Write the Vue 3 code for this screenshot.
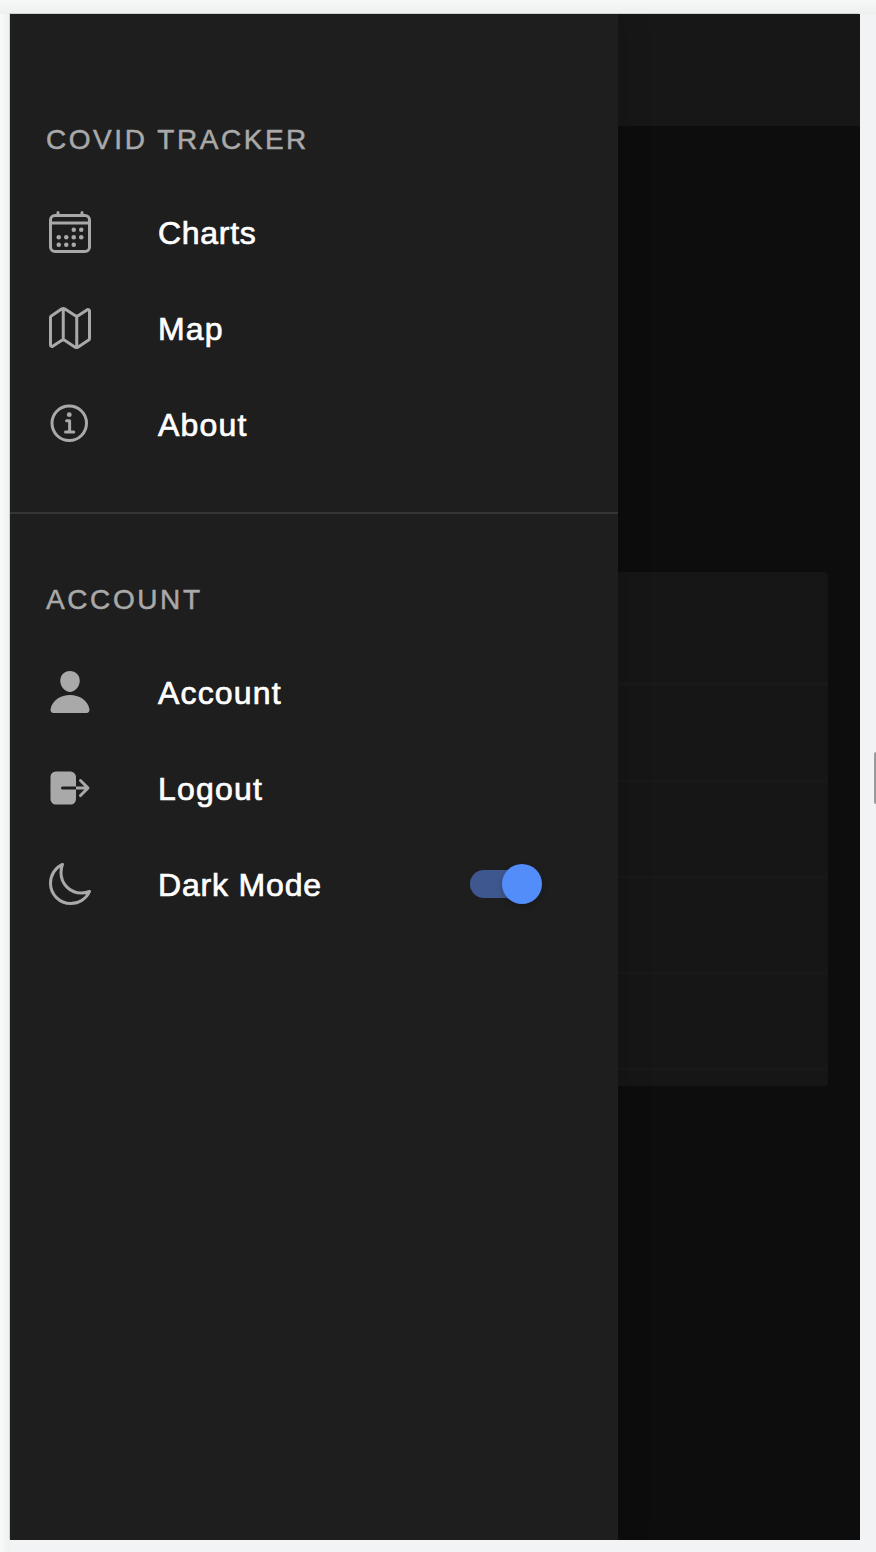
<script setup>
import { ref } from 'vue'

const dark = ref(true)
</script>

<template>
  <div class="stage">
    <div class="device">
      <nav class="menu">
        <section class="group">
          <h2 class="heading tracker">COVID TRACKER</h2>
          <a class="item">
            <svg class="icon" viewBox="0 0 512 512">
              <rect class="line" x="48" y="80" width="416" height="384" rx="48" />
              <circle cx="296" cy="232" r="24" /><circle cx="376" cy="232" r="24" />
              <circle cx="296" cy="312" r="24" /><circle cx="376" cy="312" r="24" />
              <circle cx="136" cy="312" r="24" /><circle cx="216" cy="312" r="24" />
              <circle cx="136" cy="392" r="24" /><circle cx="216" cy="392" r="24" />
              <circle cx="296" cy="392" r="24" />
              <path class="line" d="M128 48v32M384 48v32" />
              <path class="line" d="M464 160H48" />
            </svg>
            <span class="label charts">Charts</span>
          </a>
          <a class="item">
            <svg class="icon" viewBox="0 0 512 512">
              <path class="line" d="M313.27 124.64L198.73 51.36a32 32 0 00-29.28.35L56.51 127.49A16 16 0 0048 141.63v295.8a16 16 0 0023.49 14.14l97.82-63.79a32 32 0 0129.5-.24l111.86 73a32 32 0 0029.27-.11l115.43-75.94a16 16 0 008.63-14.2V74.57a16 16 0 00-23.49-14.14l-98 63.86a32 32 0 01-29.24.35zM328 128v336M184 384V48" />
            </svg>
            <span class="label map">Map</span>
          </a>
          <a class="item">
            <svg class="icon" viewBox="0 0 512 512">
              <path class="line" d="M248 64C146.39 64 64 146.39 64 248s82.39 184 184 184 184-82.39 184-184S349.61 64 248 64z" />
              <path class="line" d="M220 220h32v116M208 340h88" />
              <path d="M248 130a26 26 0 1026 26 26 26 0 00-26-26z" />
            </svg>
            <span class="label about">About</span>
          </a>
        </section>
        <section class="group second">
          <h2 class="heading account">ACCOUNT</h2>
          <a class="item">
            <svg class="icon" viewBox="0 0 512 512">
              <path d="M332.64 64.58C313.18 43.57 286 32 256 32c-30.16 0-57.43 11.5-76.8 32.38-19.58 21.11-29.12 49.8-26.88 80.78C156.76 206.28 203.27 256 256 256s99.16-49.71 103.67-110.82c2.27-30.7-7.33-59.33-27.03-80.6zM432 480H80a31 31 0 01-24.2-11.13c-6.5-7.77-9.12-18.38-7.18-29.11C57.06 392.94 83.4 353.61 124.8 326c36.78-24.51 83.37-38 131.2-38s94.42 13.5 131.2 38c41.4 27.6 67.74 66.93 76.18 113.75 1.94 10.73-.68 21.34-7.18 29.11A31 31 0 01432 480z" />
            </svg>
            <span class="label user">Account</span>
          </a>
          <a class="item">
            <svg class="icon" viewBox="0 0 512 512">
              <path d="M160 256a16 16 0 0116-16h144V136c0-32-33.79-56-64-56H104a56.06 56.06 0 00-56 56v240a56.06 56.06 0 0056 56h160a56.06 56.06 0 0056-56V272H176a16 16 0 01-16-16zM459.31 244.69l-80-80a16 16 0 00-22.62 22.62L409.37 240H320v32h89.37l-52.68 52.69a16 16 0 1022.62 22.62l80-80a16 16 0 000-22.62z" />
            </svg>
            <span class="label logout">Logout</span>
          </a>
          <div class="item">
            <svg class="icon" viewBox="0 0 512 512">
              <path class="line" d="M160 136c0-30.62 4.51-61.61 16-88C99.57 81.27 48 159.32 48 248c0 119.29 96.71 216 216 216 88.68 0 166.73-51.57 200-128-26.39 11.49-57.38 16-88 16-119.29 0-216-96.71-216-216z" />
            </svg>
            <span class="label mode">Dark Mode</span>
            <button class="toggle" :class="{ on: dark }" role="switch" :aria-checked="dark" @click="dark = !dark">
              <span class="knob"></span>
            </button>
          </div>
        </section>
      </nav>
      <main class="page">
        <header class="toolbar"></header>
        <div class="card">
          <div class="row first"></div>
          <div class="row"></div>
          <div class="row"></div>
          <div class="row"></div>
          <div class="row"></div>
        </div>
      </main>
    </div>
    <div class="scroll"></div>
  </div>
</template>

<style>
body {
  background: #f1f3f5;
}
</style>

<style scoped>
.stage {
  position: relative;
  box-sizing: border-box;
  height: 1552px;
  padding: 14px 16px 12px 10px;
  overflow: hidden;
  background:
    linear-gradient(to bottom, #f5f8f7, #eef0ef) 0 0 / 100% 14px no-repeat,
    linear-gradient(to right, #f7faf8, #eef1ef) 0 0 / 10px 100% no-repeat,
    #f1f3f5;
  font-family: "Liberation Sans", Arial, sans-serif;
}
.device {
  display: flex;
  height: 1526px;
  background: #0d0d0d;
  box-shadow: -1px -1px 0 #cfd0d0;
}
.menu {
  position: relative;
  z-index: 1;
  width: 608px;
  flex: none;
  background: #1e1e1e;
  box-shadow: 0 0 32px rgba(0, 0, 0, 0.18);
  clip-path: inset(0 -50px 0 0);
}
.group {
  box-sizing: border-box;
  height: 500px;
  padding-top: 80px;
  border-bottom: 2px solid #353535;
}
.group.second {
  height: auto;
  padding-top: 40px;
  border: 0;
}
.heading {
  box-sizing: border-box;
  height: 90px;
  margin: 0;
  padding: 1px 0 0 36px;
  color: #a9a9a9;
  font-size: 28px;
  font-weight: 400;
  line-height: 90px;
  white-space: nowrap;
  -webkit-text-stroke: 0.5px #a9a9a9;
}
.item {
  display: flex;
  align-items: center;
  height: 96px;
  padding: 0 76px 0 36px;
}
.icon {
  width: 48px;
  height: 48px;
  margin-right: 64px;
  flex: none;
  fill: #a9a9a9;
}
.line {
  fill: none;
  stroke: #a9a9a9;
  stroke-width: 32;
  stroke-linecap: round;
  stroke-linejoin: round;
}
.label {
  flex: 1;
  padding-top: 2px;
  color: #fff;
  font-size: 32px;
  line-height: 48px;
  white-space: nowrap;
  -webkit-text-stroke: 0.7px #fff;
}
.tracker { letter-spacing: 2.55px; }
.account { letter-spacing: 2.6px; }
.charts { letter-spacing: 0.7px; }
.map { letter-spacing: 1.2px; }
.about { letter-spacing: 1.2px; }
.user { letter-spacing: 1.15px; }
.logout { letter-spacing: 1.2px; }
.mode { letter-spacing: 0.82px; }
.toggle {
  display: flex;
  align-items: center;
  width: 72px;
  height: 28px;
  padding: 0;
  border: 0;
  border-radius: 14px;
  background: #555;
}
.toggle.on {
  justify-content: flex-end;
  background: linear-gradient(#3e588f, #3e588f) 0 0 / 60px 100% no-repeat;
}
.knob {
  width: 40px;
  height: 40px;
  flex: none;
  border-radius: 50%;
  background: #528dfa;
  box-shadow: 0 3px 6px rgba(0, 0, 0, 0.2);
}
.page {
  flex: 1;
}
.toolbar {
  height: 112px;
  background: #171717;
}
.card {
  box-sizing: border-box;
  height: 514px;
  margin: 446px 32px 0 0;
  border-radius: 0 4px 4px 0;
  background: #161616;
}
.row {
  box-sizing: border-box;
  height: 96px;
  border-bottom: 2px solid #191919;
}
.row.first {
  height: 114px;
  border-bottom-width: 4px;
}
.scroll {
  position: absolute;
  top: 752px;
  right: 0;
  width: 2px;
  height: 52px;
  border-radius: 2px 0 0 2px;
  background: #9b9b9b;
}
</style>
